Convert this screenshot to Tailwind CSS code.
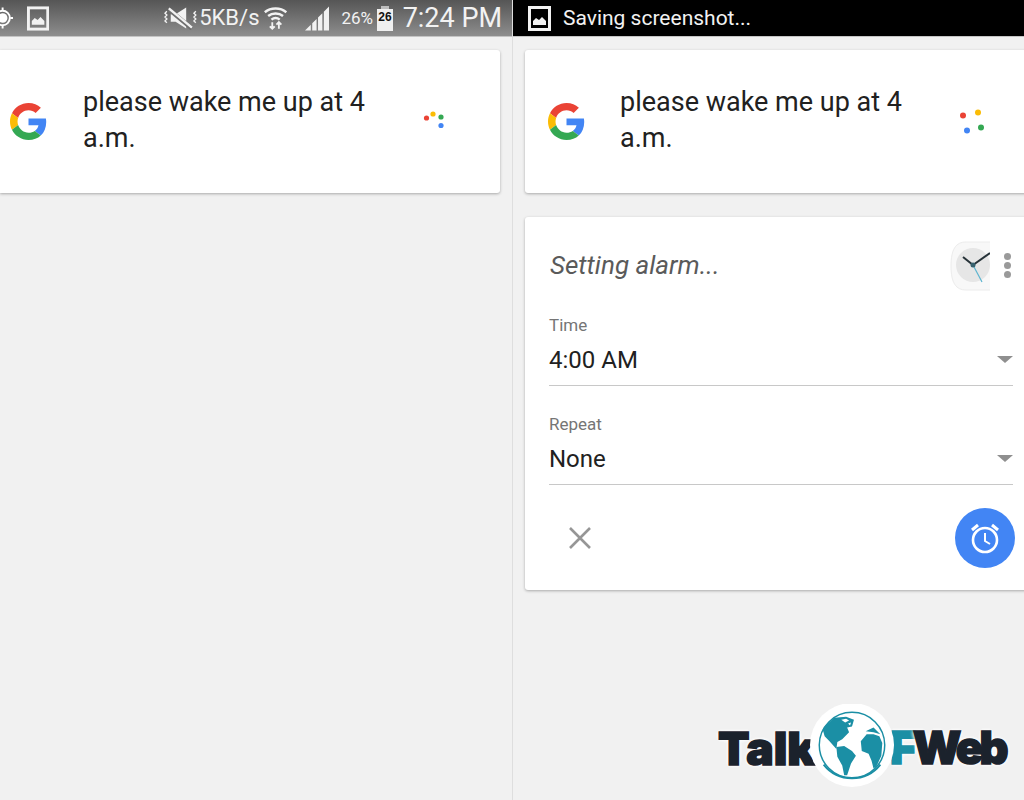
<!DOCTYPE html>
<html lang="en">
<head>
    <meta charset="UTF-8">
    <title>Setting alarm</title>
    <script src="https://cdn.jsdelivr.net/npm/@tailwindcss/browser@4"></script>
</head>
<body class="bg-[#f1f1f1] font-['Roboto',sans-serif] text-[#212121]">
<div class="relative w-[1024px] h-[800px] overflow-hidden flex">

    <!-- left phone -->
    <div class="w-[513px] shrink-0 border-r border-[#dedede]">
        <div class="h-[37px] bg-gradient-to-b from-[#565656] to-[#8e8e8e] border-b border-[#c4c4c4] flex items-center text-[#f2f2f2] pr-[10px]">
            <svg class="w-[22px] h-[22px] ml-[-8px]" viewBox="0 0 22 22" fill="none" stroke="#fff" stroke-width="2"><circle cx="11" cy="11" r="7.500"/><circle cx="11" cy="11" r="5" fill="#fff" stroke="none"/><path d="M11 0v3M11 19v3M0 11h3M19 11h3"/></svg>
            <svg class="w-[23px] h-[25px] ml-[14px]" viewBox="0 0 23 25"><rect x="1.500" y="1.500" width="20" height="22" fill="none" stroke="#f2f2f2" stroke-width="3"/><path d="M5 19v-4l3-3 3 2 3-3 4 4v4z" fill="#f2f2f2"/></svg>
            <svg class="w-[34px] h-[24px] ml-[115px]" viewBox="0 0 34 24" fill="none" stroke="#f2f2f2"><path d="M3 5l-2 2 2 2-2 2 2 2-2 2 2 2M33 5l-2 2 2 2-2 2 2 2-2 2 2 2" stroke-width="1.400"/><path d="M7 8h5l11-7v22l-11-7H7z" fill="#f2f2f2" stroke="none"/><path d="M5 3l24 20" stroke="#6f6f6f" stroke-width="4.500"/><path d="M5 2l24 20" stroke-width="2.500"/></svg>
            <span class="text-[22px] leading-none ml-[2px] w-[59px]">5KB/s</span>
            <svg class="w-[24px] h-[26px] ml-[6px]" viewBox="0 0 28 28" fill="none" stroke="#f2f2f2" stroke-width="3"><path d="M1 7c7-6 19-6 26 0M5 11.500c5-4 13-4 18 0M9 16c3-2.500 7-2.500 10 0"/><path d="M10 19v8M7 24l3 3 3-3M18 27v-8M15 22l3-3 3 3" stroke-width="2.200"/></svg>
            <svg class="w-[25px] h-[25px] ml-[18px] mt-[1px]" viewBox="0 0 25 25" fill="#f2f2f2"><path d="M0 25l6-6v6zM7.500 25v-7.500l4.500-4.500v12zM13.500 25v-13.500l4.500-4.500v18zM19.500 25v-19.500l5.500-5.500v25z"/></svg>
            <span class="text-[17px] leading-none ml-[12px] w-[37px]">26%</span>
            <div class="w-[16px] h-[25px] flex flex-col items-center">
                <span class="w-[8px] h-[3px] bg-[#bdbdbd]"></span>
                <span class="w-full flex-1 bg-[#efefef] text-[#111] text-[12px] font-bold leading-[16px] text-center font-['Liberation_Sans',sans-serif]">26</span>
            </div>
            <span class="text-[27px] leading-none ml-[10px] whitespace-nowrap">7:24 PM</span>
        </div>
        <div class="mt-[13px] w-[500px] h-[143px] bg-white rounded-r-[3px] shadow-[0_1px_3px_rgba(0,0,0,0.3)] flex items-center">
            <svg class="w-[37px] h-[37px] ml-[10px] shrink-0" viewBox="0 0 48 48"><path fill="#EA4335" d="M24 9.5c3.54 0 6.71 1.22 9.21 3.6l6.85-6.85C35.9 2.38 30.47 0 24 0 14.62 0 6.51 5.38 2.56 13.22l7.98 6.19C12.43 13.72 17.74 9.5 24 9.5z"/><path fill="#4285F4" d="M46.98 24.55c0-1.57-.15-3.09-.38-4.55H24v9.02h12.94c-.58 2.96-2.26 5.48-4.78 7.18l7.73 6c4.51-4.18 7.09-10.36 7.09-17.65z"/><path fill="#FBBC05" d="M10.53 28.59c-.48-1.45-.76-2.99-.76-4.59s.27-3.14.76-4.59l-7.98-6.19C.92 16.46 0 20.12 0 24c0 3.88.92 7.54 2.56 10.78l7.97-6.19z"/><path fill="#34A853" d="M24 48c6.48 0 11.93-2.13 15.89-5.81l-7.73-6c-2.15 1.45-4.92 2.3-8.16 2.3-6.26 0-11.57-4.22-13.47-9.91l-7.98 6.19C6.51 42.62 14.62 48 24 48z"/></svg>
            <p class="ml-[36px] w-[300px] mb-[3px] text-[27px] leading-[36px]">please wake me up at 4 a.m.</p>
            <svg class="w-[24px] h-[24px] ml-[40px]" viewBox="0 0 24 24"><circle cx="3.500" cy="8" r="2.600" fill="#EA4335"/><circle cx="10" cy="4" r="2.600" fill="#FBBC05"/><circle cx="18" cy="7" r="2.600" fill="#34A853"/><circle cx="18" cy="15.500" r="2.600" fill="#4285F4"/></svg>
        </div>
    </div>

    <!-- right phone -->
    <div class="flex-1 min-w-0">
        <div class="h-[37px] bg-black border-b border-[#c4c4c4] flex items-center text-[#f2f2f2] pl-[15px]">
            <svg class="w-[23px] h-[25px]" viewBox="0 0 23 25"><rect x="1.500" y="1.500" width="20" height="22" fill="none" stroke="#f2f2f2" stroke-width="3"/><path d="M5 19v-4l3-3 3 2 3-3 4 4v4z" fill="#f2f2f2"/></svg>
            <span class="ml-[12px] text-[21px] leading-none">Saving screenshot...</span>
        </div>
        <div class="mt-[13px] ml-[12px] w-[520px] h-[143px] bg-white rounded-l-[3px] shadow-[0_1px_3px_rgba(0,0,0,0.3)] flex items-center">
            <svg class="w-[37px] h-[37px] ml-[23px] shrink-0" viewBox="0 0 48 48"><path fill="#EA4335" d="M24 9.5c3.54 0 6.71 1.22 9.21 3.6l6.85-6.85C35.9 2.38 30.47 0 24 0 14.62 0 6.51 5.38 2.56 13.22l7.98 6.19C12.43 13.72 17.74 9.5 24 9.5z"/><path fill="#4285F4" d="M46.98 24.55c0-1.57-.15-3.09-.38-4.55H24v9.02h12.94c-.58 2.96-2.26 5.48-4.78 7.18l7.73 6c4.51-4.18 7.09-10.36 7.09-17.65z"/><path fill="#FBBC05" d="M10.53 28.59c-.48-1.45-.76-2.99-.76-4.59s.27-3.14.76-4.59l-7.98-6.19C.92 16.46 0 20.12 0 24c0 3.88.92 7.54 2.56 10.78l7.97-6.19z"/><path fill="#34A853" d="M24 48c6.48 0 11.93-2.13 15.89-5.81l-7.73-6c-2.15 1.45-4.92 2.3-8.16 2.3-6.26 0-11.57-4.22-13.47-9.91l-7.98 6.19C6.51 42.62 14.62 48 24 48z"/></svg>
            <p class="ml-[35px] w-[300px] mb-[3px] text-[27px] leading-[36px]">please wake me up at 4 a.m.</p>
            <svg class="w-[28px] h-[28px] ml-[37px]" viewBox="0 0 28 28"><circle cx="6" cy="7.500" r="3" fill="#EA4335"/><circle cx="21" cy="4.500" r="3" fill="#FBBC05"/><circle cx="24" cy="19.500" r="3" fill="#34A853"/><circle cx="10" cy="22.500" r="3" fill="#4285F4"/></svg>
        </div>
        <div class="mt-[24px] ml-[12px] w-[520px] h-[373px] bg-white rounded-l-[3px] shadow-[0_1px_3px_rgba(0,0,0,0.3)] pl-[24px] pr-[32px] flex flex-col">
            <div class="h-[98px] flex items-center justify-between pb-[1px]">
                <span class="italic ml-[1px] text-[26px] text-[#5a5a5a]">Setting alarm...</span>
                <div class="flex items-center mr-[2px]">
                    <svg class="w-[40px] h-[50px]" viewBox="0 0 40 50"><path d="M40 1H16C6 1 1 8 1 25s5 24 15 24h24z" fill="#f8f8f8"/><path d="M40 1H16C6 1 1 8 1 25s5 24 15 24h24" fill="none" stroke="#ececec"/><circle cx="23" cy="24" r="17" fill="#e6e6e6"/><path d="M23 24L13 16" stroke="#263238" stroke-width="2"/><path d="M23 24L40 12" stroke="#263238" stroke-width="2"/><path d="M23 24L32 41" stroke="#5cb4cf" stroke-width="1.200"/><circle cx="23" cy="24" r="2.500" fill="#37616e"/></svg>
                    <div class="ml-[14px] flex flex-col gap-[2px]">
                        <span class="w-[7px] h-[7px] rounded-full bg-[#9a9a9a]"></span>
                        <span class="w-[7px] h-[7px] rounded-full bg-[#9a9a9a]"></span>
                        <span class="w-[7px] h-[7px] rounded-full bg-[#9a9a9a]"></span>
                    </div>
                </div>
            </div>
            <div class="h-[71px] border-b border-[#c8c8c8] flex flex-col">
                <span class="text-[17px] leading-[20px] text-[#757575]">Time</span>
                <div class="flex items-center justify-between mt-[10px]">
                    <span class="text-[24px] leading-[30px]">4:00 AM</span>
                    <span class="w-0 h-0 mb-[2px] border-x-[8px] border-x-transparent border-t-[7px] border-t-[#8f8f8f]"></span>
                </div>
            </div>
            <div class="h-[99px] border-b border-[#c8c8c8] flex flex-col pt-[28px]">
                <span class="text-[17px] leading-[20px] text-[#757575]">Repeat</span>
                <div class="flex items-center justify-between mt-[10px]">
                    <span class="text-[24px] leading-[30px]">None</span>
                    <span class="w-0 h-0 mb-[2px] border-x-[8px] border-x-transparent border-t-[7px] border-t-[#8f8f8f]"></span>
                </div>
            </div>
            <div class="flex items-center justify-between flex-1 pl-[19px] mr-[-2px]">
                <svg class="w-[24px] h-[24px]" viewBox="0 0 24 24" fill="none" stroke="#969696" stroke-width="2.600"><path d="M2 2l20 20M22 2L2 22"/></svg>
                <div class="w-[60px] h-[60px] rounded-full bg-[#4285f4] flex items-center justify-center">
                    <svg class="w-[32px] h-[32px]" viewBox="0 0 32 32" fill="none" stroke="#fff" stroke-width="2.600"><circle cx="16" cy="18" r="12"/><path d="M16 11v8l5 3" stroke-width="2"/><path d="M3 8l6-5M29 8l-6-5" stroke-width="3"/></svg>
                </div>
            </div>
        </div>
    </div>

    <!-- watermark -->
    <div class="absolute left-[718px] top-[704px] w-[290px] h-[86px]">
        <span class="absolute left-0 top-[19px] text-[46px] leading-[50px] font-black text-[#1b222c] [-webkit-text-stroke:1.5px_#1b222c] [text-shadow:0_0_4px_#fff,0_0_4px_#fff,0_0_4px_#fff] font-['Inter',sans-serif]">Talk</span>
        <span class="absolute left-[172px] top-[19px] text-[45px] leading-[50px] font-black tracking-[-3.5px] text-[#1b222c] [-webkit-text-stroke:1.5px_#1b222c] [text-shadow:0_0_4px_#fff,0_0_4px_#fff,0_0_4px_#fff] font-['Inter',sans-serif]"><span class="text-[#1b8fa5] [-webkit-text-stroke:1.5px_#1b8fa5]">F</span>Web</span>
        <svg class="absolute left-[91px] top-0 w-[86px] h-[86px]" viewBox="0 0 88 88">
            <circle cx="44" cy="42" r="43" fill="#fff"/>
            <circle cx="44" cy="42" r="33.500" fill="#fff" stroke="#1b8fa5" stroke-width="1.500"/>
            <path d="M15 62a37 37 0 0 0 58 0" fill="none" stroke="#1b8fa5" stroke-width="2"/>
            <path fill="#1b8fa5" d="M18 21L26 14L38 13L46 16L44 23L39 24L41 29L34 36L29 39L28 46L21 38L16 33L14 26z"/>
            <path fill="#fff" d="M33 16l5-1 3 2-4 2zM40 20l3-1-1 3z"/>
            <path fill="#1b8fa5" d="M28 44L36 43L44 48L48 53L43 61L39 73L36 73L34 63L29 54z"/>
            <path fill="#1b8fa5" d="M53 38L59 31L66 31L72 33L75 40L74 53L69 64L66 66L64 58L61 51L54 48z"/>
            <path fill="#1b8fa5" d="M58 28L66 24L73 31L66 29z"/>
        </svg>
    </div>
</div>
</body>
</html>
